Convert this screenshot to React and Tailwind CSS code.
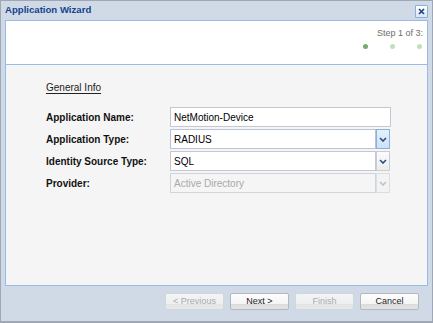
import React from "react";

const font = { fontFamily: '"Liberation Sans", Arial, sans-serif' };

function Chevron({ color }) {
  return (
    <svg width="8" height="5" viewBox="0 0 8 5">
      <path d="M1 1 L4 4 L7 1" fill="none" stroke={color} strokeWidth="1.6" />
    </svg>
  );
}

function Combo({ value, active, disabled }) {
  return (
    <div className="flex h-[20px] w-[221px]">
      <div
        className={
          "flex h-full w-[206px] items-center border pl-[3px] text-[10px] " +
          (disabled
            ? "border-[#d2d4dc] bg-[#f5f5f5] text-[#a8a8a8]"
            : active
            ? "border-[#b8c4d6] bg-white text-black"
            : "border-[#c5c8d2] bg-white text-black")
        }
      >
        {value}
      </div>
      <div
        className={
          "ml-[0px] flex h-full w-[14px] items-center justify-center border " +
          (disabled
            ? "border-[#dcdde2] bg-[#f3f3f3]"
            : active
            ? "border-[#88b2de] bg-[linear-gradient(to_bottom,#e6f0fb,#cfe1f5)]"
            : "border-[#c8ccd4] bg-[linear-gradient(to_bottom,#fbfbfb,#ececec)]")
        }
      >
        <Chevron color={disabled ? "#b9c3d0" : "#234f86"} />
      </div>
    </div>
  );
}

function Button({ children, disabled }) {
  return (
    <div
      className={
        "flex h-[17px] w-[59px] items-center justify-center rounded-[2px] border text-[9px] " +
        (disabled
          ? "border-[#d3d6da] bg-[linear-gradient(to_bottom,#f3f4f5_0%,#eeeff0_70%,#e3e4e6_70%,#e8e9ea_100%)] text-[#a9abae]"
          : "border-[#b4b7bb] bg-[linear-gradient(to_bottom,#fefefe_0%,#f4f4f4_70%,#dcdcdc_70%,#e4e4e4_100%)] text-[#1a1a1a]")
      }
    >
      {children}
    </div>
  );
}

function Row({ label, children }) {
  return (
    <div className="flex h-[20px] items-center">
      <div className="w-[124px] text-[10px] font-bold text-[#111]">{label}</div>
      {children}
    </div>
  );
}

export default function App() {
  return (
    <div
      style={font}
      className="flex h-[323px] w-[433px] flex-col border border-b-2 border-[#9ea7b3] bg-[#cfdae6]"
    >
      {/* title bar */}
      <div className="flex h-[19px] items-center justify-between pl-[4px] pr-[4px]">
        <div className="text-[9.6px] font-bold text-[#15428b]">Application Wizard</div>
        <div className="mt-[1px] flex h-[13px] w-[13px] items-center justify-center rounded-[1px] border border-[#8daed8] bg-[linear-gradient(to_bottom,#ffffff,#dbe6f4)]">
          <svg width="7" height="7" viewBox="0 0 7 7">
            <path d="M1 1 L6 6 M6 1 L1 6" stroke="#15428b" strokeWidth="1.6" />
          </svg>
        </div>
      </div>

      {/* header panel */}
      <div className="mx-[4px] flex h-[44px] flex-col items-end border border-b-0 border-[#99bbe8] bg-white pr-[4px] pt-[6px]">
        <div className="text-[9px] leading-[12px] text-[#6d6d6d]">Step 1 of 3:</div>
        <div className="mt-[5px] flex items-center gap-[22px] pr-[1px]">
          <div className="h-[5px] w-[5px] rounded-full bg-[#6fae6f]" />
          <div className="h-[5px] w-[5px] rounded-full bg-[#bfe0bd]" />
          <div className="h-[5px] w-[5px] rounded-full bg-[#bfe0bd]" />
        </div>
      </div>

      {/* body panel */}
      <div className="mx-[4px] flex h-[222px] flex-col border border-[#99bbe8] bg-[#f5f5f5] pl-[40px] pt-[17px]">
        <div className="text-[10px] leading-[12px] text-[#222] underline underline-offset-[2px]">
          General Info
        </div>
        <div className="mt-[13px] flex flex-col gap-[2px]">
          <Row label="Application Name:">
            <div className="flex h-[20px] w-[221px] items-center border border-[#c5c8d2] bg-white pl-[3px] text-[10px] text-black">
              NetMotion-Device
            </div>
          </Row>
          <Row label="Application Type:">
            <Combo value="RADIUS" active />
          </Row>
          <Row label="Identity Source Type:">
            <Combo value="SQL" />
          </Row>
          <Row label="Provider:">
            <Combo value="Active Directory" disabled />
          </Row>
        </div>
      </div>

      {/* footer */}
      <div className="flex justify-end gap-[6px] pr-[13px] pt-[7px]">
        <Button disabled>&lt; Previous</Button>
        <Button>Next &gt;</Button>
        <Button disabled>Finish</Button>
        <Button>Cancel</Button>
      </div>
    </div>
  );
}
